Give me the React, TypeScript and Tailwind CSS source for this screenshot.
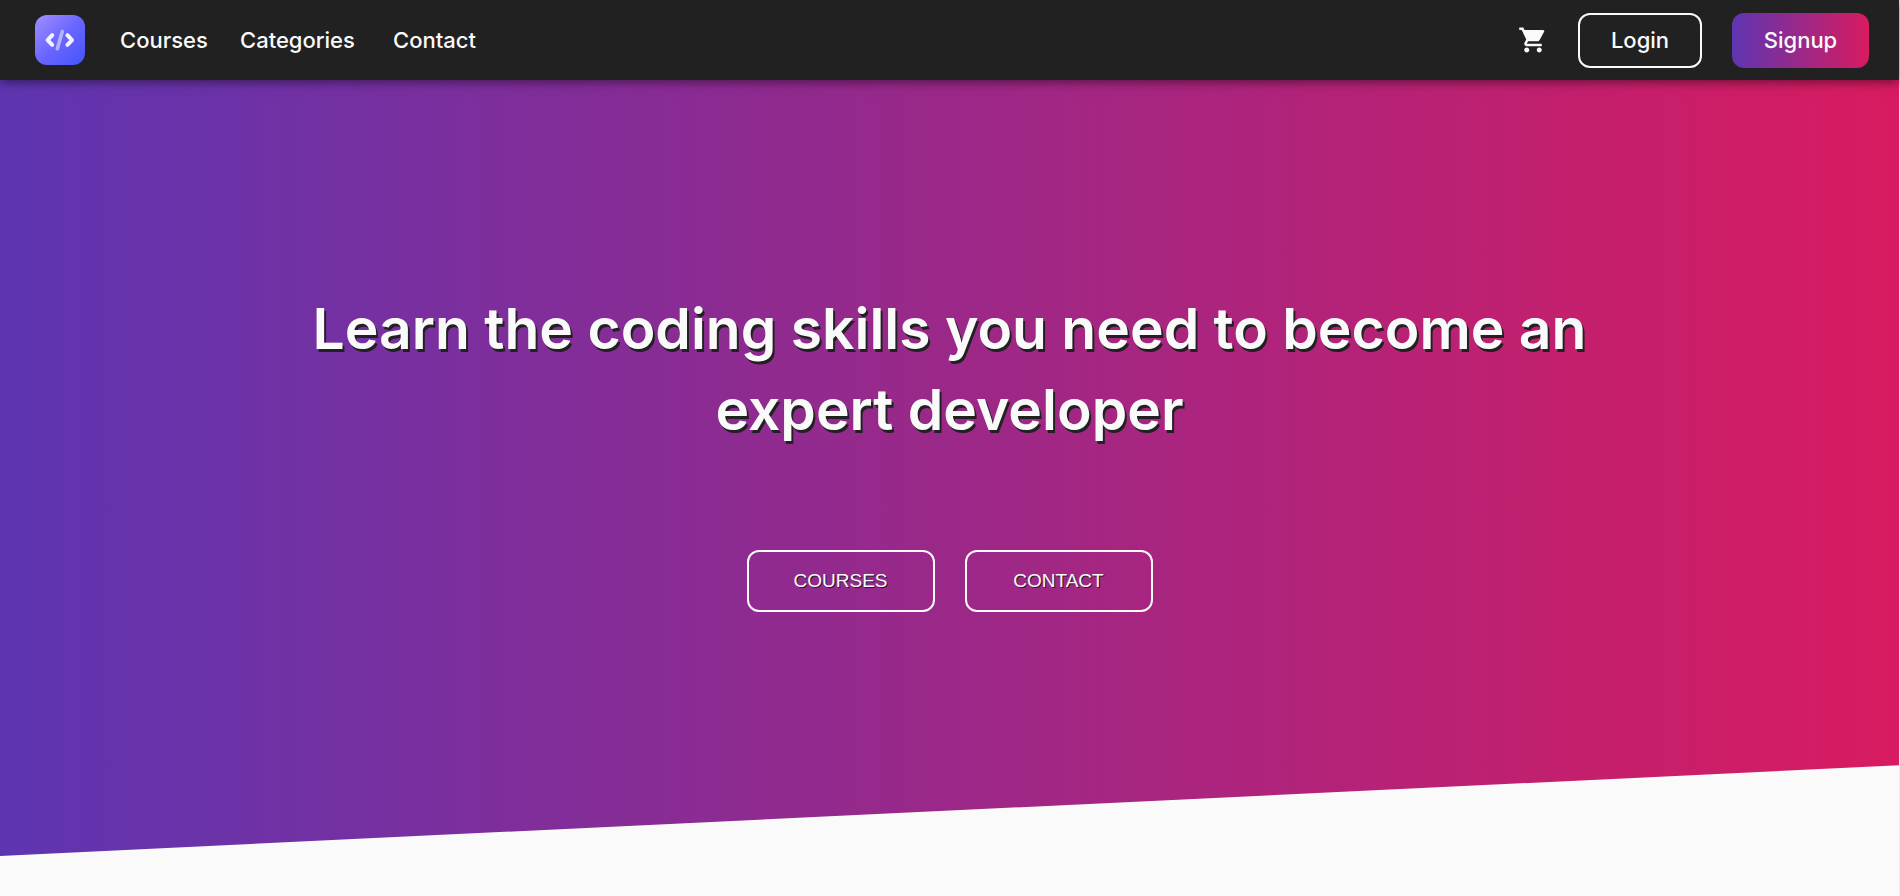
import { MdShoppingCart } from "react-icons/md";

const links = [
  { label: "Courses", href: "#courses", width: "w-[90px]" },
  { label: "Categories", href: "#categories", width: "w-[123px]" },
  { label: "Contact", href: "#contact", width: "w-[90px]" },
];

function Logo() {
  return (
    <svg viewBox="0 0 60 60" className="size-[60px]" aria-hidden="true">
      <defs>
        <linearGradient id="logo-fill" x1="0" y1="0" x2="1" y2="1">
          <stop offset="0" stopColor="#a28fff" />
          <stop offset="0.5" stopColor="#6a66ff" />
          <stop offset="1" stopColor="#4353fb" />
        </linearGradient>
      </defs>
      <rect x="5" y="5" width="50" height="50" rx="12" fill="url(#logo-fill)" />
      <g fill="none" strokeLinecap="round" strokeLinejoin="round" strokeWidth="4">
        <path d="M32.3 21.5 27.3 38.7" stroke="#b4b3ff" strokeWidth="3.6" />
        <path d="M22.2 25.2 17.6 30.1 22.2 34.8" stroke="#f3f3ff" />
        <path d="M37.4 25.2 42 30.1 37.4 34.8" stroke="#f3f3ff" />
      </g>
    </svg>
  );
}

function Header() {
  return (
    <header className="relative z-10 flex h-20 items-center justify-between bg-[#212121] px-[30px] text-[22px] font-medium text-[#fafafa] shadow-[0_2px_10px_rgba(0,0,0,0.5)]">
      <nav className="flex items-center gap-[30px]">
        <a href="#home" aria-label="Home">
          <Logo />
        </a>
        {links.map((link) => (
          <a key={link.label} href={link.href} className={link.width}>
            {link.label}
          </a>
        ))}
      </nav>
      <div className="flex items-center gap-[30px]">
        <a href="#cart" aria-label="Cart">
          <MdShoppingCart className="size-[30px]" />
        </a>
        <button className="h-[55px] w-[124px] rounded-xl border-2 border-[#fafafa]">Login</button>
        <button className="h-[55px] w-[137px] rounded-xl bg-[linear-gradient(to_right,#5e35b1,#d81b60)]">
          Signup
        </button>
      </div>
    </header>
  );
}

function Hero() {
  const action =
    "h-[62px] w-[188px] rounded-xl border-2 border-[#fafafa] font-['Liberation_Sans',sans-serif] text-[19px] uppercase [text-shadow:1px_1px_#212121]";
  return (
    <main className="flex flex-col items-center gap-[100px] bg-[linear-gradient(to_right,#5e35b1,#d81b60)] px-8 pt-[208px] pb-[244px] text-[#fafafa] [clip-path:polygon(0_0,100%_0,100%_88.3%,0_100%)]">
      <h1 className="max-w-[1330px] text-center text-[57px] leading-[81px] font-semibold [text-shadow:2px_3px_#212121]">
        Learn the coding skills you need to become an expert developer
      </h1>
      <div className="flex gap-[30px]">
        <button className={action}>Courses</button>
        <button className={action}>Contact</button>
      </div>
    </main>
  );
}

export default function App() {
  return (
    <div className="min-h-screen border-r border-[#eeeeee] bg-[#fafafa] font-['Inter',sans-serif]">
      <Header />
      <Hero />
    </div>
  );
}
